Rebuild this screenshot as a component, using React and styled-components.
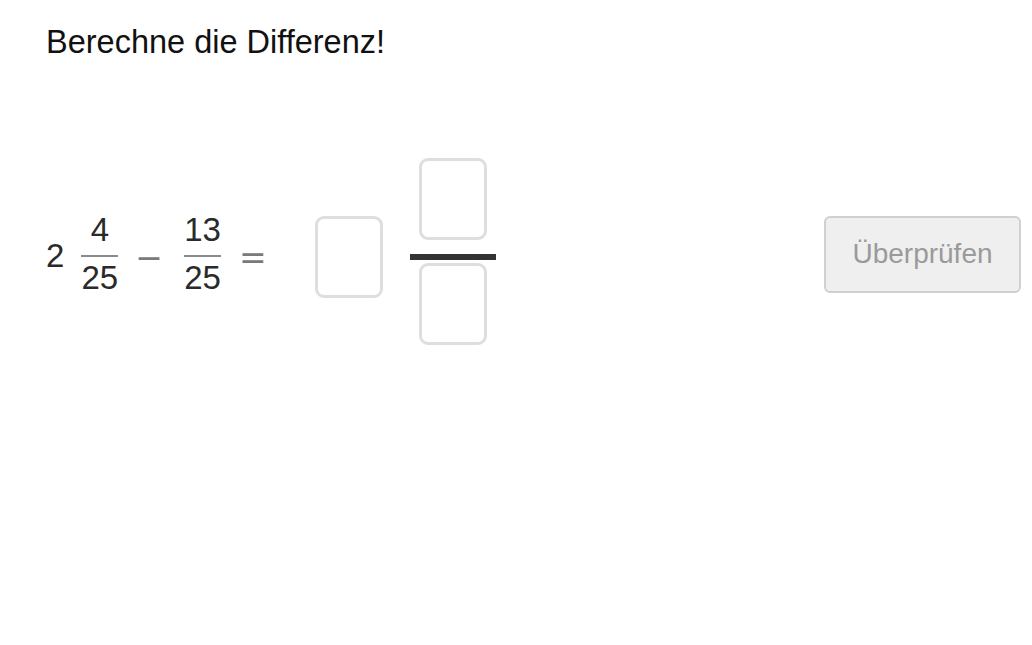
import React from "react";
import styled, { createGlobalStyle } from "styled-components";

const GlobalStyle = createGlobalStyle`
  html, body {
    margin: 0;
    padding: 0;
    background: #fff;
  }
  body {
    font-family: "Liberation Sans", Arial, sans-serif;
    color: #1a1a1a;
  }
`;

export default function App() {
  return (
    <Page>
      <GlobalStyle />
      <Title>Berechne die Differenz!</Title>
      <Row>
        <Expression>
          <Whole>2</Whole>
          <Frac>
            <FracNum>4</FracNum>
            <FracLine />
            <FracDen>25</FracDen>
          </Frac>
          <Operator $left="17px" $right="21px">−</Operator>
          <Frac>
            <FracNum>13</FracNum>
            <FracLine />
            <FracDen>25</FracDen>
          </Frac>
          <Operator $left="18px" $right="0">=</Operator>
        </Expression>

        <Answer>
          <InputBox aria-label="Ganze Zahl" />
          <AnswerFrac>
            <InputBox aria-label="Zähler" $top />
            <AnswerBar />
            <InputBox aria-label="Nenner" />
          </AnswerFrac>
        </Answer>

        <CheckButton disabled>Überprüfen</CheckButton>
      </Row>
    </Page>
  );
}

const Page = styled.div`
  width: 1032px;
  height: 645px;
  box-sizing: border-box;
  padding: 24px 11px 0 46px;
`;

const Title = styled.h1`
  margin: 0;
  font-size: 32.5px;
  font-weight: normal;
  line-height: 37px;
  color: #111;
`;

const Row = styled.div`
  display: flex;
  align-items: center;
  margin-top: 97px;
`;

const Expression = styled.div`
  display: flex;
  align-items: center;
  font-size: 33px;
  color: #2a2a2a;
`;

const Whole = styled.span`
  line-height: 1;
  margin: 0 17px 4px 0;
`;

const Frac = styled.span`
  display: inline-flex;
  flex-direction: column;
  align-items: center;
  width: 37px;
  line-height: 32px;
  margin-bottom: 6px;
`;

const FracNum = styled.span`
  padding-bottom: 9px;
`;

const FracDen = styled.span`
  padding-top: 5px;
`;

const FracLine = styled.span`
  display: block;
  width: 100%;
  height: 2px;
  background: #8a8a8a;
`;

const Operator = styled.span`
  margin: 0 ${(p) => p.$right} 0 ${(p) => p.$left};
  font-family: "DejaVu Sans", sans-serif;
  color: #7a7a7a;
  line-height: 1;
`;

const Answer = styled.div`
  display: flex;
  align-items: center;
  margin-left: 48px;
`;

const InputBox = styled.div`
  width: 68px;
  height: 82px;
  box-sizing: border-box;
  border: 3px solid #dedede;
  border-radius: 9px;
  background: #fff;
  margin-bottom: ${(p) => (p.$top ? "14px" : "0")};
`;

const AnswerFrac = styled.div`
  display: flex;
  flex-direction: column;
  align-items: center;
  width: 86px;
  margin-left: 27px;
  padding-bottom: 11px;
`;

const AnswerBar = styled.div`
  width: 100%;
  height: 6px;
  background: #333;
  margin-bottom: 3px;
`;

const CheckButton = styled.button`
  margin: 0 0 6px auto;
  width: 197px;
  height: 77px;
  box-sizing: border-box;
  border: 2px solid #d0d0d0;
  border-radius: 6px;
  background: #efefef;
  color: #9a9a9a;
  font-family: "Liberation Sans", Arial, sans-serif;
  font-size: 28px;
  padding: 0;
  cursor: default;
`;
